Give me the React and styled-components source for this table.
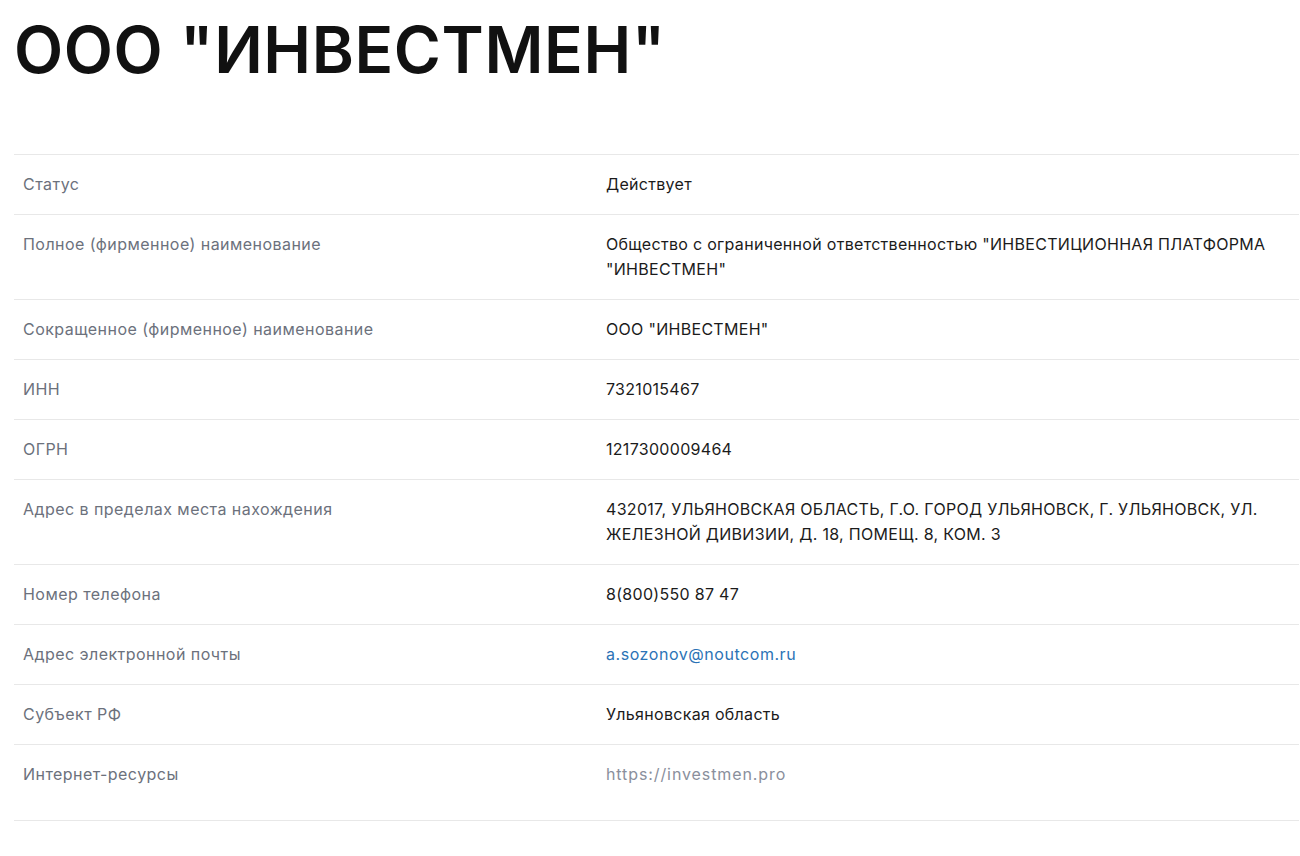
import React from "react";
import styled, { createGlobalStyle } from "styled-components";

const Global = createGlobalStyle`
  html, body { margin: 0; padding: 0; background: #fff; }
  body { font-family: Inter, "Noto Sans", sans-serif; -webkit-font-smoothing: antialiased; }
`;

const Page = styled.div`
  padding: 0 1px 0 14px;
`;

const Title = styled.h1`
  margin: 0;
  padding: 10px 0 0 0;
  font-family: Inter, "Noto Sans", sans-serif;
  font-weight: 600;
  font-size: 64px;
  line-height: 80px;
  color: #111111;
  letter-spacing: 0.6px;
`;

const Table = styled.div`
  margin-top: 64px;
  border-top: 1px solid #e8e8e8;
`;

const Row = styled.div`
  display: grid;
  grid-template-columns: 583px 1fr;
  border-bottom: 1px solid #e8e8e8;
  padding-bottom: ${(p) => (p.$extra ? "16px" : "0")};
`;

const Cell = styled.div`
  padding: 17px 9px 17px 9px;
  font-size: 16px;
  line-height: 25px;
`;

const Label = styled(Cell)`
  color: #6c717c;
  letter-spacing: 0.45px;
`;

const Value = styled(Cell)`
  color: ${(p) => (p.$tone === "link" ? "#2b73b6" : p.$tone === "muted" ? "#8a8f9c" : "#1b1b1b")};
  letter-spacing: ${(p) => (p.$tone === "muted" ? "0.9px" : p.$tone === "link" ? "0.55px" : "0.3px")};
`;

const rows = [
  ["Статус", "Действует"],
  ["Полное (фирменное) наименование", 'Общество с ограниченной ответственностью "ИНВЕСТИЦИОННАЯ ПЛАТФОРМА "ИНВЕСТМЕН"'],
  ["Сокращенное (фирменное) наименование", 'ООО "ИНВЕСТМЕН"'],
  ["ИНН", "7321015467"],
  ["ОГРН", "1217300009464"],
  ["Адрес в пределах места нахождения", "432017, УЛЬЯНОВСКАЯ ОБЛАСТЬ, Г.О. ГОРОД УЛЬЯНОВСК, Г. УЛЬЯНОВСК, УЛ. ЖЕЛЕЗНОЙ ДИВИЗИИ, Д. 18, ПОМЕЩ. 8, КОМ. 3"],
  ["Номер телефона", "8(800)550 87 47"],
  ["Адрес электронной почты", "a.sozonov@noutcom.ru", "link"],
  ["Субъект РФ", "Ульяновская область"],
  ["Интернет-ресурсы", "https://investmen.pro", "muted"],
];

export default function App() {
  return (
    <Page>
      <Global />
      <Title>ООО "ИНВЕСТМЕН"</Title>
      <Table>
        {rows.map(([l, v, tone], i) => (
          <Row key={l} $extra={i === rows.length - 1}>
            <Label>{l}</Label>
            <Value $tone={tone}>{v}</Value>
          </Row>
        ))}
      </Table>
    </Page>
  );
}
